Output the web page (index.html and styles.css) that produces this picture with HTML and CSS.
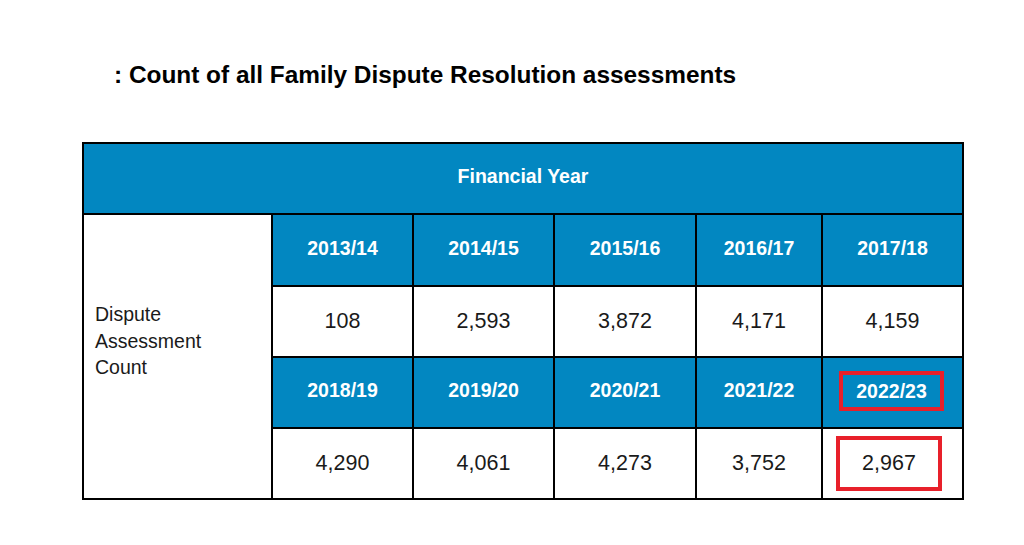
FILE: index.html
```html
<!DOCTYPE html>
<html lang="en">
<head>
<meta charset="utf-8">
<title>Family Dispute Resolution assessments</title>
<link rel="stylesheet" href="styles.css">
</head>
<body>
<h1 class="title">: Count of all Family Dispute Resolution assessments</h1>
<div class="grid">
  <div class="cell head span-all">Financial Year</div>
  <div class="cell label">Dispute<br>Assessment<br>Count</div>
  <div class="cell head">2013/14</div>
  <div class="cell head">2014/15</div>
  <div class="cell head">2015/16</div>
  <div class="cell head">2016/17</div>
  <div class="cell head">2017/18</div>
  <div class="cell val">108</div>
  <div class="cell val">2,593</div>
  <div class="cell val">3,872</div>
  <div class="cell val">4,171</div>
  <div class="cell val">4,159</div>
  <div class="cell head">2018/19</div>
  <div class="cell head">2019/20</div>
  <div class="cell head">2020/21</div>
  <div class="cell head">2021/22</div>
  <div class="cell head"><span class="mark mark-year">2022/23</span></div>
  <div class="cell val">4,290</div>
  <div class="cell val">4,061</div>
  <div class="cell val">4,273</div>
  <div class="cell val">3,752</div>
  <div class="cell val"><span class="mark mark-val">2,967</span></div>
</div>
</body>
</html>
```
FILE: styles.css
```css
html, body {
  margin: 0;
  padding: 0;
  background: #ffffff;
}
body {
  font-family: "Liberation Sans", Arial, sans-serif;
  color: #1a1a1a;
  padding: 61px 0 0 82px;
}
.title {
  margin: 0 0 0 32px;
  font-size: 24.4px;
  line-height: 28px;
  font-weight: bold;
  color: #000;
}
.grid {
  margin-top: 53px;
  width: 878px;
  display: grid;
  grid-template-columns: 187px 139px 139px 140px 124px 139px;
  grid-template-rows: 69px 70px 69px 69px 69px;
  gap: 2px;
  padding: 2px;
  background: #000;
}
.cell {
  display: flex;
  align-items: center;
  justify-content: center;
  background: #fff;
}
.span-all {
  grid-column: 1 / -1;
}
.head {
  background: #0287c1;
  color: #fff;
  font-weight: bold;
  font-size: 19.5px;
  padding-bottom: 4px;
}
.label {
  grid-row: 2 / 6;
  grid-column: 1;
  align-items: flex-start;
  justify-content: flex-start;
  padding: 86px 0 0 11px;
  font-size: 19.5px;
  line-height: 26.5px;
  color: #1a1a1a;
}
.val {
  font-size: 21.5px;
  color: #1a1a1a;
}
.mark {
  display: inline-block;
  border: 4px solid #e8202a;
}
.mark-year {
  padding: 5px 13px;
  line-height: 22px;
  margin-top: 0;
  margin-left: -2px;
}
.mark-val {
  padding: 12px 22px;
  line-height: 23px;
  margin-left: -7px;
}
```
